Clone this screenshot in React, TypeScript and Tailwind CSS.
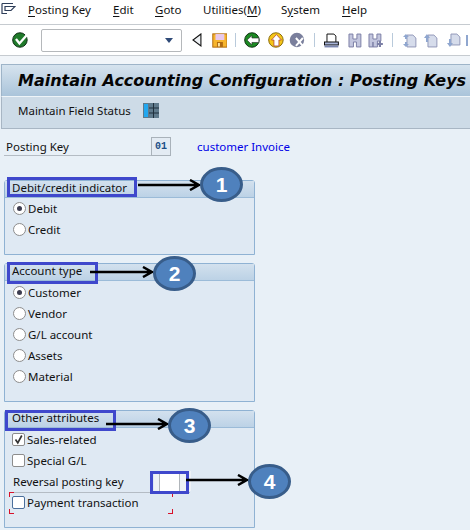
import React from "react";

const U = ({ children }: { children: React.ReactNode }) => <span className="underline underline-offset-2">{children}</span>;

const MenuItem = ({ className, children }: { className: string; children: React.ReactNode }) => (
  <span className={`absolute top-[2px] ${className}`}>{children}</span>
);

const Sep = ({ className }: { className: string }) => <div className={`w-[1px] h-[14px] bg-[#b9cadb] ${className}`} />;

const Radio = ({ label, on }: { label: string; on?: boolean }) => (
  <div className="flex items-center h-[21px] pl-[8px]">
    <span className="w-[13px] h-[13px] rounded-full border border-[#8d8d8d] bg-white flex items-center justify-center">
      {on && <span className="w-[5px] h-[5px] rounded-full bg-[#3d3d50]" />}
    </span>
    <span className="ml-[2px]">{label}</span>
  </div>
);

const Check = ({ label, on, blue }: { label: string; on?: boolean; blue?: boolean }) => (
  <div className="flex items-center h-[21px] pl-[7px]">
    <span className={`w-[13px] h-[13px] rounded-[2px] border bg-white flex items-center justify-center ${blue ? "border-[#4a6f9c]" : "border-[#8d8d8d]"}`}>
      {on && (
        <svg width="11" height="11" viewBox="0 0 11 11">
          <path d="M2.5 5.5 L4.8 8.8 L8.8 1.5" fill="none" stroke="#333" strokeWidth="1.7" />
        </svg>
      )}
    </span>
    <span className="ml-[2px]">{label}</span>
  </div>
);

const Panel = ({ title, className, children }: { title: string; className: string; children: React.ReactNode }) => (
  <section className={`ml-[4px] w-[251px] border border-[#8fb2d3] rounded-t-[3px] bg-[#dfe9f3] ${className}`}>
    <div className="h-[17px] bg-gradient-to-b from-[#d3e1ee] to-[#bcd2e6] border-b border-[#9bbbd8] pl-[7px] leading-[14px]">{title}</div>
    {children}
  </section>
);

const Callout = ({ n, circle, arrow, box }: { n: string; circle: string; arrow: string; box: string }) => (
  <>
    <div className={`absolute border-[3px] border-[#3f48cc] ${box}`} />
    <svg className={`absolute h-[12px] ${arrow}`} viewBox="0 0 64 12" preserveAspectRatio="xMaxYMid slice">
      <path d="M0 6 H61 M53 1 L62 6 L53 11" fill="none" stroke="#000" strokeWidth="2.5" />
    </svg>
    <div className={`absolute w-[43px] h-[35px] rounded-[50%] bg-[#4f81bd] border-[3px] border-[#385d8a] flex items-center justify-center text-white text-[21px] font-bold font-['Liberation_Sans',sans-serif] ${circle}`}>
      {n}
    </div>
  </>
);

export default function App() {
  return (
    <div className="relative w-[470px] h-[530px] overflow-hidden bg-[#e8f0f7] text-[11.5px] text-[#111111] font-['Noto_Sans',sans-serif]">
      {/* Menu bar */}
      <div className="h-[24px] bg-white relative leading-[16px]">
        <svg className="absolute left-[1px] top-[2px]" width="15" height="13" viewBox="0 0 15 13">
          <path d="M1 1.5 H12 M1 1.5 V11.5 H6 M4 4.5 H14 L10 8.5 H4 Z" fill="none" stroke="#2f3f5a" strokeWidth="1.2" />
        </svg>
        <MenuItem className="left-[28px]"><U>P</U>osting Key</MenuItem>
        <MenuItem className="left-[113px]"><U>E</U>dit</MenuItem>
        <MenuItem className="left-[155px]"><U>G</U>oto</MenuItem>
        <MenuItem className="left-[203px]">Utilities(<U>M</U>)</MenuItem>
        <MenuItem className="left-[281px]">S<U>y</U>stem</MenuItem>
        <MenuItem className="left-[342px]"><U>H</U>elp</MenuItem>
      </div>

      {/* Toolbar */}
      <div className="h-[32px] bg-white border-y border-[#c6cbd0] flex items-center">
        <svg className="ml-[12px]" width="17" height="16" viewBox="0 0 17 16">
          <circle cx="8" cy="8" r="7.3" fill="#1f7a2a" stroke="#0c2d12" />
          <path d="M4 7 L7.5 11.5 L15 3" fill="none" stroke="#fff" strokeWidth="2.4" />
        </svg>
        <div className="ml-[12px] w-[142px] h-[23px] bg-white border border-[#b5b8bb] rounded-[2px] flex items-center justify-end pr-[8px]">
          <span className="w-0 h-0 border-x-[4px] border-x-transparent border-t-[5px] border-t-[#2f4a78]" />
        </div>
        <svg className="ml-[10px]" width="10" height="14" viewBox="0 0 10 14">
          <path d="M9 1 L1 7 L9 13 Z" fill="#eef1f4" stroke="#111" strokeWidth="1.1" />
        </svg>
        <svg className="ml-[10px]" width="16" height="15" viewBox="0 0 16 15">
          <rect x="0.8" y="0.8" width="14.4" height="13.4" fill="#f7b52c" stroke="#b06a10" />
          <rect x="3.5" y="1" width="9" height="6" fill="#e7c8ec" />
          <rect x="5" y="9" width="6" height="5" fill="#b06a10" />
          <rect x="6" y="10" width="2" height="3.5" fill="#fbe39f" />
        </svg>
        <Sep className="ml-[8px]" />
        <svg className="ml-[8px]" width="17" height="16" viewBox="0 0 17 16">
          <circle cx="8" cy="8" r="7.3" fill="#1c8a22" stroke="#0d3010" />
          <path d="M3 8 L8 3.5 V6 H15 V10.5 H8 V13 Z" fill="#fff" stroke="#222" strokeWidth="0.6" />
        </svg>
        <svg className="ml-[7px]" width="17" height="16" viewBox="0 0 17 16">
          <circle cx="8" cy="8" r="7.3" fill="#f5c518" stroke="#8a6a08" />
          <path d="M8.5 2.5 L13.5 8 H11 V14 H6 V8 H3.5 Z" fill="#fff" stroke="#a33" strokeWidth="0.7" />
        </svg>
        <svg className="ml-[4px]" width="17" height="16" viewBox="0 0 17 16">
          <circle cx="8" cy="8" r="7.3" fill="#7a7f9c" />
          <path d="M7 6 L14 14 M14 6 L7 14" stroke="#fff" strokeWidth="2" />
        </svg>
        <Sep className="ml-[8px]" />
        <svg className="ml-[9px]" width="15" height="15" viewBox="0 0 15 15">
          <path d="M3 9 V1 H10 L12 3 V9" fill="#fff" stroke="#111" />
          <rect x="0.5" y="9" width="14" height="3" fill="#a8b4d8" stroke="#111" />
          <rect x="0.5" y="12.5" width="14" height="2" fill="#7b86b0" />
        </svg>
        <svg className="ml-[8px]" width="16" height="15" viewBox="0 0 16 15">
          <path d="M2 1 H6 V6 H10 V1 H14 V14 H9.5 V9 H6.5 V14 H2 Z" fill="#c3c6de" stroke="#7c80a6" />
        </svg>
        <svg className="ml-[5px]" width="16" height="15" viewBox="0 0 16 15">
          <path d="M1 1 H5 V6 H9 V1 H13 V8 H9.5 V14 H5 V9 H5 V14 H1 Z" fill="#c3c6de" stroke="#7c80a6" />
          <path d="M12 8 V14 M9 11 H15" stroke="#7c80a6" strokeWidth="2.2" />
        </svg>
        <Sep className="ml-[9px]" />
        <svg className="ml-[9px]" width="16" height="15" viewBox="0 0 16 15">
          <path d="M5 2 H11 L14 5 V14 H5 Z" fill="#d6dceb" stroke="#9298b8" />
          <path d="M4 1 L7 4 H5 V6 H3 V4 H1 Z M4 14 L7 11 H5 V9 H3 V11 H1 Z" fill="#8fa6cf" />
        </svg>
        <svg className="ml-[5px]" width="16" height="15" viewBox="0 0 16 15">
          <path d="M5 2 H11 L14 5 V14 H5 Z" fill="#d6dceb" stroke="#9298b8" />
          <path d="M4 1 L7 5 H5 V9 H3 V5 H1 Z" fill="#8fa6cf" />
        </svg>
        <svg className="ml-[7px]" width="16" height="15" viewBox="0 0 16 15">
          <path d="M5 1 H11 L14 4 V12 H5 Z" fill="#d6dceb" stroke="#9298b8" />
          <path d="M4 14 L7 10 H5 V6 H3 V10 H1 Z" fill="#8fa6cf" />
        </svg>
        <svg className="ml-[4px]" width="4" height="15" viewBox="0 0 4 15">
          <path d="M1 2 V13" stroke="#8fa6cf" strokeWidth="2" />
        </svg>
      </div>

      {/* Title */}
      <div className="h-[8px] bg-[#f1f5f9]" />
      <div className="ml-[1px] border-l border-t border-[#9eb4c8] h-[32px] bg-gradient-to-b from-[#d6e3ee] to-[#aac4da] pl-[16px] flex items-center text-[16px] font-bold italic text-[#050505] whitespace-nowrap font-['DejaVu_Sans',sans-serif]">
        Maintain Accounting Configuration : Posting Keys
      </div>
      <div className="ml-[1px] border-l border-t border-b border-t-[#eef4f8] border-[#a8b6c4] h-[33px] bg-[#cddbe7] pl-[16px] pb-[4px] flex items-center">
        <span>Maintain Field Status</span>
        <svg className="ml-[12px]" width="16" height="15" viewBox="0 0 16 15">
          <rect x="0" y="0" width="16" height="15" fill="#5f7a8c" />
          <rect x="1" y="1" width="4" height="13" fill="#22a7ef" />
          <path d="M6 5 H16 M6 10 H16 M10.5 0 V15" stroke="#1f2f3c" strokeWidth="1" />
        </svg>
      </div>

      {/* Posting key row */}
      <div className="mt-[8px] h-[19px] ml-[4px] w-[167px] border-b border-[#b4bcc4] flex items-center justify-between relative">
        <span className="ml-[2px] pt-[1px]">Posting Key</span>
        <span className="w-[20px] h-[19px] bg-[#e3ebf3] border border-[#a9b2ba] flex items-center justify-center text-[10px] text-[#1c4f86] font-['Liberation_Mono',monospace] font-bold">01</span>
        <span className="absolute left-[193px] pt-[1px] whitespace-nowrap text-[#0000e6]">customer Invoice</span>
      </div>

      {/* Panels */}
      <Panel title="Debit/credit indicator" className="mt-[24px] h-[75px]">
        <div>
          <Radio label="Debit" on />
          <Radio label="Credit" />
        </div>
      </Panel>

      <Panel title="Account type" className="mt-[8px] h-[139px]">
        <div className="pt-[1px]">
          <Radio label="Customer" on />
          <Radio label="Vendor" />
          <Radio label="G/L account" />
          <Radio label="Assets" />
          <Radio label="Material" />
        </div>
      </Panel>

      <Panel title="Other attributes" className="mt-[8px] h-[118px]">
        <div className="pt-[1px]">
          <Check label="Sales-related" on />
          <Check label="Special G/L" />
          <div className="relative h-[21px] ml-[8px] mr-[66px] flex items-center">
            <span>Reversal posting key</span>
            <div className="absolute left-[-3px] right-[-2px] bottom-[-1px] border-b border-[#b4bcc4]" />
            <div className="absolute left-[141px] top-[0px] w-[37px] h-[20px] bg-[#eef2f6] flex justify-start pl-[5px]">
              <div className="w-[21px] h-full bg-white border-x border-[#b0b5ba]" />
            </div>
          </div>
          <Check label="Payment transaction" blue />
        </div>
      </Panel>

      {/* Red selection corners */}
      <div className="absolute left-[9px] top-[492px] w-[5px] h-[5px] border-l border-t border-[#d8112a]" />
      <div className="absolute left-[168px] top-[492px] w-[5px] h-[5px] border-r border-t border-[#d8112a]" />
      <div className="absolute left-[9px] top-[509px] w-[5px] h-[5px] border-l border-b border-[#d8112a]" />
      <div className="absolute left-[168px] top-[509px] w-[5px] h-[5px] border-r border-b border-[#d8112a]" />

      {/* Annotations */}
      <Callout n="1" box="left-[7px] top-[177px] w-[130px] h-[20px]" arrow="left-[138px] top-[179px] w-[63px]" circle="left-[200px] top-[167px]" />
      <Callout n="2" box="left-[7px] top-[262px] w-[91px] h-[22px]" arrow="left-[90px] top-[266px] w-[64px]" circle="left-[153px] top-[256px]" />
      <Callout n="3" box="left-[5px] top-[410px] w-[111px] h-[21px]" arrow="left-[106px] top-[418px] w-[63px]" circle="left-[168px] top-[408px]" />
      <Callout n="4" box="left-[150px] top-[471px] w-[39px] h-[23px]" arrow="left-[186px] top-[474px] w-[63px]" circle="left-[248px] top-[464px]" />
    </div>
  );
}
